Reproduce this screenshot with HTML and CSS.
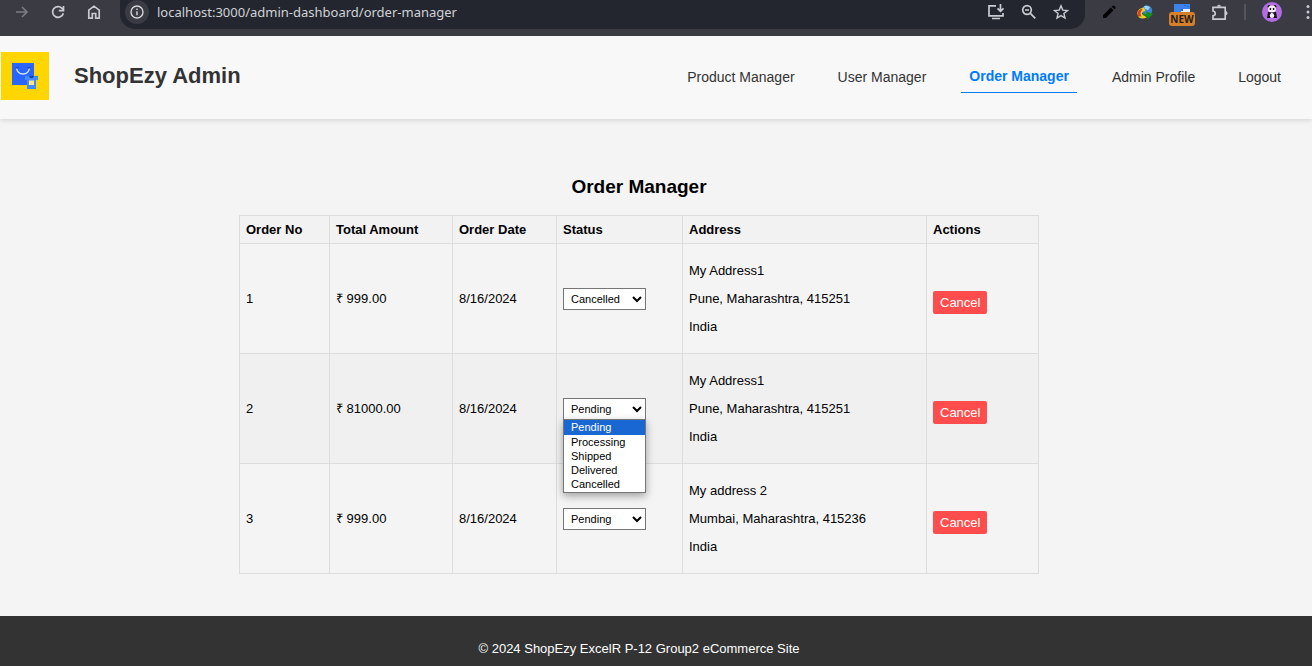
FILE: index.html
```html
<!DOCTYPE html>
<html lang="en">
<head>
<meta charset="utf-8">
<title>ShopEzy Admin - Order Manager</title>
<link rel="stylesheet" href="styles.css">
</head>
<body>
<div class="toolbar">
  <button class="tool dim" aria-label="Forward"><svg width="14" height="14" viewBox="0 0 14 14" fill="none" stroke="currentColor" stroke-width="1.6"><path d="M1 7h11M7 2l5 5-5 5"/></svg></button>
  <button class="tool" aria-label="Reload"><svg width="14" height="14" viewBox="0 0 14 14" fill="none" stroke="currentColor" stroke-width="1.7"><path d="M12.300 8.200A5.400 5.400 0 1 1 11 3.300L12.300 4.800M12.500 1v4.600H7.800"/></svg></button>
  <button class="tool" aria-label="Home"><svg width="14" height="14" viewBox="0 0 14 14" fill="none" stroke="currentColor" stroke-width="1.7"><path d="M1.800 13.100V5.200L7 1.200l5.200 4v7.900H8.700V8.500H5.300v4.600z"/></svg></button>
  <div class="omnibox">
    <button class="info" aria-label="Site information"><svg width="14" height="14" viewBox="0 0 14 14" fill="none" stroke="currentColor" stroke-width="1.4"><circle cx="7" cy="7" r="6"/><path d="M7 6.200v4M7 3.500v1.500"/></svg></button>
    <input class="url" type="text" aria-label="Address" value="localhost:3000/admin-dashboard/order-manager">
    <button class="tool" aria-label="Install app"><svg width="18" height="16" viewBox="0 0 18 16" fill="none" stroke="currentColor" stroke-width="1.7"><path d="M9 1.800H2v10h14V9M5 14.500h8M13.500 0v7M10.500 4.300l3 3 3-3"/></svg></button>
    <button class="tool" aria-label="Zoom"><svg width="16" height="16" viewBox="0 0 16 16" fill="none" stroke="currentColor" stroke-width="1.700"><circle cx="6" cy="6" r="4.300"/><path d="M9.300 9.300l5 5M4 6h4"/></svg></button>
    <button class="tool" aria-label="Bookmark"><svg width="16" height="16" viewBox="0 0 16 16" fill="none" stroke="currentColor" stroke-width="1.400"><path d="M8 1.800l1.800 4.300 4.700.4-3.600 3 1.100 4.600L8 11.600l-4 2.500 1.100-4.600-3.600-3 4.700-.4z"/></svg></button>
  </div>
  <div class="extensions">
    <button class="tool" aria-label="Editor extension"><svg width="14" height="14" viewBox="0 0 14 14" fill="#050505"><path d="M1 13V10.200L8.800 2.600l2.700 2.700L3.800 13zM9.700 1.700L10.800.7q.7-.6 1.400 0l1.200 1.200q.6.700 0 1.400l-1.100 1z"/></svg></button>
    <button class="tool" aria-label="Download manager"><svg width="16" height="15" viewBox="0 0 16 15"><circle cx="10" cy="5.500" r="5.200" fill="#3d83cf"/><path d="M7 1q4-1.200 6 1.500L11 5 8 4z" fill="#9bd7f5"/><path d="M0 8.500Q1 3 7 2.500L8.500 6Q5 6 5 9l5 3.500q-5 2-8 0z" fill="#e8d12b"/><path d="M.5 8q1-4 5-4.500L4.500 6q-2 2 0 5.500Q0 12 .5 8z" fill="#dd3b22"/><path d="M5.500 8l4 1-.5-2.500 7 2.500-5.500 5.500.3-2.500-4.300-1.500z" fill="#129018"/></svg></button>
    <button class="tool badge-holder" aria-label="New extension"><svg width="16" height="14" viewBox="0 0 16 14"><path d="M0 0h16v14H0z" fill="#3c82ed"/><path d="M7 5h9v6H7z" fill="#e6edf8"/><path d="M7 5h2v2H7z" fill="#2869d4"/><path d="M10 1h2v1h-2zM13 2h2v1h-2z" fill="#2369d3"/></svg><span class="badge">NEW</span></button>
    <button class="tool" aria-label="Extensions"><svg width="17" height="17" viewBox="0 0 17 17" fill="none" stroke="currentColor" stroke-width="1.700"><path d="M2 3.300h12.200v11.900H2v-3.400q2.200-.4 2.200-2.400T2 7z"/><path d="M6.300 2.500q0-1.500 1.700-1.500t1.700 1.500zM15 7.500q1.300 0 1.300 1.700T15 10.900z" fill="currentColor" stroke-width=".5"/></svg></button>
    <span class="divider"></span>
    <button class="tool" aria-label="Profile"><svg width="20" height="20" viewBox="0 0 20 20"><circle cx="10" cy="10" r="10" fill="#b46ce2"/><g fill="#171319"><circle cx="7" cy="4.500" r="1.500"/><circle cx="13" cy="4.500" r="1.500"/><path d="M6 10h8l1 6H5z"/></g><ellipse cx="10" cy="7" rx="4" ry="3.500" fill="#f4eff5"/><ellipse cx="10" cy="13.500" rx="2.200" ry="2.500" fill="#f4eff5"/><circle cx="8.400" cy="7" r=".9"/><circle cx="11.600" cy="7" r=".9"/></svg></button>
    <button class="tool more" aria-label="Menu"><svg width="4" height="16" viewBox="0 0 4 16" fill="currentColor"><circle cx="2" cy="2.500" r="1.500"/><circle cx="2" cy="8" r="1.500"/><circle cx="2" cy="13.500" r="1.500"/></svg></button>
  </div>
</div>

<header class="header">
  <svg class="logo" width="48" height="48" viewBox="0 0 48 48" role="img" aria-label="ShopEzy logo"><path d="M0 0h48v48H0z" fill="#ffd600"/><path d="M11 11h22v22H11z" fill="#2b65ff"/><path d="M15.500 16q1 6 6.500 6t6.500-6" fill="none" stroke="#d5e4ff" stroke-width="1.400"/><path d="M14.500 15h3v1.500h-3zM26.500 15h3v1.500h-3z" fill="#174bad"/><path d="M24 24h13v4h-2v9H26v-9h-2z" fill="#448aff"/><path d="M28 24h5l-1 2h-3z" fill="#1545a4"/><path d="M28 28.500h5v4.500h-5z" fill="#ffe680"/></svg>
  <h1 class="brand">ShopEzy Admin</h1>
  <nav class="nav">
    <a href="#">Product Manager</a>
    <a href="#">User Manager</a>
    <a href="#" class="active" aria-current="page">Order Manager</a>
    <a href="#">Admin Profile</a>
    <a href="#">Logout</a>
  </nav>
</header>

<main class="main">
  <h2 class="heading">Order Manager</h2>
  <table class="orders">
    <colgroup><col class="c-no"><col class="c-total"><col class="c-date"><col class="c-status"><col class="c-address"><col class="c-actions"></colgroup>
    <thead>
      <tr><th>Order No</th><th>Total Amount</th><th>Order Date</th><th>Status</th><th>Address</th><th>Actions</th></tr>
    </thead>
    <tbody>
      <tr>
        <td>1</td><td>₹ 999.00</td><td>8/16/2024</td>
        <td><div class="status"><select aria-label="Status of order 1"><option>Pending</option><option>Processing</option><option>Shipped</option><option>Delivered</option><option selected>Cancelled</option></select></div></td>
        <td><p>My Address1</p><p>Pune, Maharashtra, 415251</p><p>India</p></td>
        <td><button class="cancel">Cancel</button></td>
      </tr>
      <tr>
        <td>2</td><td>₹ 81000.00</td><td>8/16/2024</td>
        <td><div class="status"><select aria-label="Status of order 2"><option selected>Pending</option><option>Processing</option><option>Shipped</option><option>Delivered</option><option>Cancelled</option></select>
          <ul class="menu" role="listbox" aria-label="Status options"><li class="current" role="option" aria-selected="true">Pending</li><li role="option">Processing</li><li role="option">Shipped</li><li role="option">Delivered</li><li role="option">Cancelled</li></ul></div></td>
        <td><p>My Address1</p><p>Pune, Maharashtra, 415251</p><p>India</p></td>
        <td><button class="cancel">Cancel</button></td>
      </tr>
      <tr>
        <td>3</td><td>₹ 999.00</td><td>8/16/2024</td>
        <td><div class="status"><select aria-label="Status of order 3"><option selected>Pending</option><option>Processing</option><option>Shipped</option><option>Delivered</option><option>Cancelled</option></select></div></td>
        <td><p>My address 2</p><p>Mumbai, Maharashtra, 415236</p><p>India</p></td>
        <td><button class="cancel">Cancel</button></td>
      </tr>
    </tbody>
  </table>
</main>

<footer class="footer"><p>© 2024 ShopEzy ExcelR P-12 Group2 eCommerce Site</p></footer>
</body>
</html>
```
FILE: styles.css
```css
* { box-sizing: border-box; }

body {
  margin: 0;
  min-height: 100vh;
  display: flex;
  flex-direction: column;
  background: #f4f4f4;
  color: #000;
  font: 13px/15px "Liberation Sans", Arial, sans-serif;
}

button, input, select { font-family: inherit; }

/* Browser toolbar */
.toolbar {
  display: flex;
  align-items: flex-start;
  height: 36px;
  padding: 0 2px 0 15px;
  gap: 22px;
  overflow: hidden;
  background: #3a3b43;
  color: #c9cbd1;
}

.tool {
  display: flex;
  align-items: center;
  justify-content: center;
  flex: none;
  height: 24px;
  padding: 0;
  border: 0;
  background: none;
  color: inherit;
}

.dim { color: #7d7e84; }

.omnibox {
  flex: 1;
  display: flex;
  align-items: flex-start;
  gap: 16px;
  height: 29px;
  margin: 0 -5px 0 -3px;
  padding: 0 16px 0 5px;
  border-radius: 0 0 15px 15px;
  background: #23262e;
}

.info {
  display: flex;
  align-items: center;
  justify-content: center;
  width: 24px;
  height: 24px;
  padding: 0;
  border: 0;
  border-radius: 12px;
  background: #3a3b43;
  color: #d5d7da;
}

.url {
  flex: 1;
  min-width: 0;
  height: 24px;
  margin-left: -8px;
  padding: 0;
  border: 0;
  background: none;
  color: #d0d3d7;
  font: 13px/24px "Noto Sans", sans-serif;
}

.extensions {
  display: flex;
  align-items: flex-start;
  gap: 21px;
}

.badge-holder {
  position: relative;
  align-items: flex-start;
  padding-top: 4px;
}

.badge {
  position: absolute;
  top: 12px;
  left: -5px;
  width: 26px;
  height: 14px;
  border-radius: 3px;
  background: #d7802b;
  color: #242018;
  font: bold 10px/14px "Open Sans", sans-serif;
  text-align: center;
}

.divider {
  width: 2px;
  height: 16px;
  margin: 4px -5px 0;
  background: #54555e;
}

.more { margin-left: 3px; }

/* Site header */
.header {
  display: flex;
  align-items: center;
  height: 83px;
  padding: 0 23px 3px 1px;
  background: #f8f8f8;
  box-shadow: 0 2px 4px rgba(0, 0, 0, 0.1);
}

.brand {
  margin: 0 0 0 25px;
  color: #333;
  font-size: 22px;
  line-height: 26px;
}

.nav {
  display: flex;
  align-items: flex-end;
  gap: 27px;
  margin-left: auto;
}

.nav a {
  padding: 9px 8px 8px;
  color: #333;
  font-size: 14px;
  line-height: 16px;
  text-decoration: none;
}

.nav .active {
  border-bottom: 1px solid #007bff;
  color: #007bff;
  font-weight: bold;
}

/* Orders */
.main { padding: 57px 34px 42px 0; }

.heading {
  margin: 0 0 17px;
  font-size: 19px;
  line-height: 22px;
  text-align: center;
}

.orders {
  width: 800px;
  max-width: 100%;
  margin: 0 auto;
  table-layout: fixed;
  border-collapse: collapse;
}

.c-no { width: 90px; }
.c-total { width: 123px; }
.c-date { width: 104px; }
.c-status { width: 126px; }
.c-address { width: 244px; }
.c-actions { width: 112px; }

th, td {
  padding: 6px;
  border: 1px solid #ddd;
  text-align: left;
}

th { background: #f2f2f2; }
tbody tr:nth-child(even) { background: #f0f0f0; }
td p { margin: 13px 0; }

.status {
  position: relative;
  width: 83px;
}

select {
  display: block;
  width: 100%;
  height: 22px;
  padding: 0 3px;
  border: 1px solid #767676;
  border-radius: 0;
  background-color: #fff;
  color: #000;
  font-size: 11px;
}

.menu {
  position: absolute;
  top: 21px;
  left: 0;
  z-index: 1;
  width: 100%;
  margin: 0;
  padding: 0 0 1px;
  border: 1px solid #767676;
  background: #fff;
  box-shadow: 0 3px 8px rgba(0, 0, 0, 0.35);
  font-size: 11px;
  line-height: 14px;
  list-style: none;
}

.menu li { padding: 0 7px; }

.menu .current {
  padding-bottom: 1px;
  background: #1967d2;
  color: #fff;
}

.cancel {
  display: block;
  margin-top: 8px;
  padding: 4px 7px;
  border: 0;
  border-radius: 2px;
  background: #ff4d4d;
  color: #fff;
  font-size: 13px;
  line-height: 15px;
}

/* Footer */
.footer {
  flex: 1;
  padding: 25px 34px 10px 0;
  background: #333;
  color: #fff;
  text-align: center;
}

.footer p { margin: 0; }
```
